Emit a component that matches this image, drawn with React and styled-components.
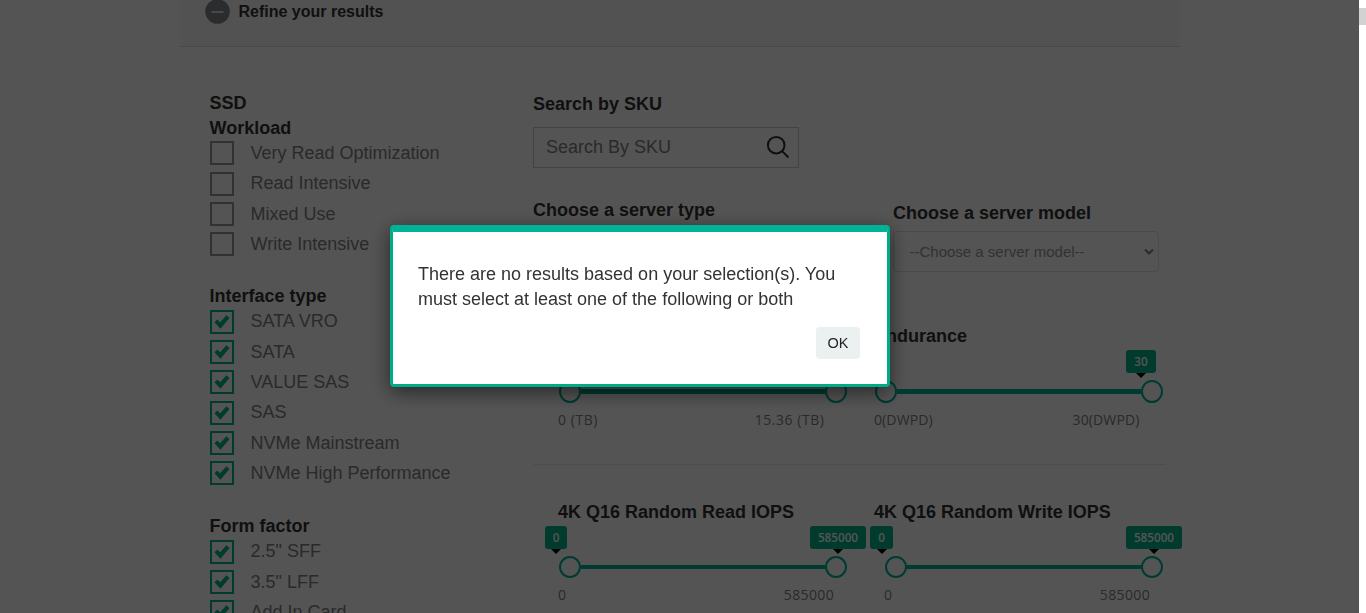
import React from 'react';
import styled, { createGlobalStyle, css } from 'styled-components';

const GlobalStyle = createGlobalStyle`
  *, *::before, *::after { box-sizing: border-box; }
  body {
    margin: 0;
    height: 613px;
    overflow: hidden;
    background: #fff;
    color: #333;
    font-family: Arial, "Liberation Sans", sans-serif;
    font-size: 18px;
    line-height: 25px;
  }
`;

const Screen = styled.div`
  display: flex;
  height: 613px;
  overflow: hidden;
`;

const Page = styled.main`
  flex: 1;
  padding-left: 180px;
`;

const Scrollbar = styled.div`
  width: 7px;
  background: #fff;
  padding-top: 8px;
`;

const Thumb = styled.div`
  height: 17px;
  background: #d2d2d2;
`;

const RefineBar = styled.header`
  display: flex;
  align-items: flex-start;
  gap: 9px;
  width: 1000px;
  height: 47px;
  padding-left: 24.5px;
  background: #f9f9f9;
  border-bottom: 1px solid #dcdcdc;
  font-size: 16px;
  font-weight: bold;
  line-height: 23px;
`;

const MinusIcon = styled.svg`
  width: 25px;
  height: 25px;
  margin-top: -1px;
`;

const Columns = styled.div`
  display: flex;
  width: 1000px;
  padding: 43px 0 0 29.5px;
`;

const Filters = styled.aside`
  width: 323.5px;
`;

const Group = styled.section`
  margin-bottom: ${(p) => (p.$on ? 23 : 22.07)}px;
`;

const Heading = styled.h3`
  height: 25px;
  margin: 0;
  font-size: 18px;
  font-weight: bold;
  line-height: ${(p) => (p.$high ? 26 : 27)}px;
`;

const Option = styled.label`
  display: flex;
  align-items: center;
  gap: 17px;
  height: 30.33px;
  color: #808080;
  line-height: 25px;
`;

const OptionText = styled.span`
  margin-top: -3.59px;
`;

const Box = styled.span`
  display: flex;
  align-items: center;
  justify-content: center;
  flex: none;
  width: 24px;
  height: 24px;
  margin-top: -3.7px;
  border: 2px solid ${(p) => (p.$on ? '#00b388' : '#999')};
`;

const Results = styled.div`
  width: 633px;
  padding-top: 1px;
`;

const SearchField = styled.div`
  display: flex;
  align-items: center;
  justify-content: space-between;
  width: 266px;
  height: 41px;
  margin-top: 11px;
  padding: 0 8px 0 12px;
  border: 1px solid #ccc;
  color: #808080;
`;

const SearchIcon = styled.svg`
  width: 24px;
  height: 24px;
  margin-top: -1px;
`;

const Servers = styled.div`
  display: flex;
  gap: 94px;
  margin-top: 29px;
  height: 126px;
`;

const ServerField = styled.div`
  width: 266px;
  padding-top: ${(p) => p.$drop || 0}px;
`;

const Select = styled.div`
  display: flex;
  align-items: center;
  justify-content: space-between;
  height: 41px;
  margin-top: 6px;
  padding: 0 4px 0 15.5px;
  border: 1px solid #e2e2e2;
  border-radius: 4px;
  color: #999;
  font-size: 15px;
`;

const SliderRow = styled.div`
  display: flex;
  padding: ${(p) => p.$top || 0}px 0 0 25px;
  height: ${(p) => p.$height}px;
  ${(p) => p.$rule && css`border-bottom: 1px solid #e9e9e9;`}
`;

const SliderCell = styled.div`
  flex: none;
  width: 316px;
`;

const Track = styled.div`
  position: relative;
  display: flex;
  align-items: center;
  width: ${(p) => p.$width}px;
  height: ${(p) => (p.$tall ? 23 : 22)}px;
  margin: 32px 0 0 ${(p) => p.$left}px;
`;

const Handle = styled.span`
  flex: none;
  width: 22px;
  height: 100%;
  border: 2px solid #00b398;
  border-radius: 50%;
`;

const Line = styled.span`
  flex: 1;
  height: ${(p) => (p.$tall ? 5 : 4)}px;
  background: #00b398;
`;

const Tip = styled.span`
  position: absolute;
  top: -30px;
  left: ${(p) => p.$x}px;
  width: ${(p) => p.$w}px;
  height: 23px;
  border-radius: 3px;
  background: #00b388;
  color: #fff;
  font: 600 11.7px/22px "Open Sans", "Noto Sans", sans-serif;
  text-align: center;
  &::after {
    content: '';
    position: absolute;
    top: 23px;
    left: calc(50% - 5px);
    border: 5px solid transparent;
    border-top-color: #000;
    border-bottom: 0;
  }
`;

const Scale = styled.div`
  display: flex;
  justify-content: space-between;
  width: ${(p) => p.$width}px;
  margin: 6px 0 0 ${(p) => p.$left || 0}px;
  color: #808080;
  font: 14px/22px "Open Sans", "Noto Sans", sans-serif;
  letter-spacing: ${(p) => p.$spacing || 0}px;
`;

const Overlay = styled.div`
  position: fixed;
  inset: 0 7px 0 0;
  background: rgba(0, 0, 0, 0.67);
`;

const Dialog = styled.div`
  position: fixed;
  top: 225px;
  left: 390px;
  display: flex;
  flex-direction: column;
  width: 500px;
  height: 162px;
  padding: 30px 27px 25px 25px;
  border: 3px solid #00ac86;
  border-top: 7px solid #00b398;
  border-radius: 4px;
  background: #fff;
  box-shadow: 0 5px 20px rgba(0, 0, 0, 0.55);
  color: #333;
`;

const Message = styled.p`
  margin: 0;
  line-height: 25px;
`;

const OkButton = styled.button`
  align-self: flex-end;
  width: 44px;
  height: 32px;
  margin-top: 15px;
  padding: 0;
  border: 0;
  border-radius: 4px;
  background: #ebf0f0;
  color: #222;
  font: 14.5px/32px Arial, "Liberation Sans", sans-serif;
`;

const Check = () => (
  <svg width="16" height="16" viewBox="0 0 16 16">
    <path d="M0.5 8.3 L3.3 5.6 L6.2 8.2 L12.4 1.2 L15.5 3.9 L6.4 14.8 Z" fill="#00b388" />
  </svg>
);

const FilterGroup = ({ titles, options, on }) => (
  <Group $on={on}>
    {titles.map((t) => <Heading key={t} $high={on}>{t}</Heading>)}
    {options.map((o) => (
      <Option key={o}>
        <Box $on={on}>{on && <Check />}</Box>
        <OptionText>{o}</OptionText>
      </Option>
    ))}
  </Group>
);

const Slider = ({ title, min, max, tips, tall, left = 1, width = 288, scaleLeft, scaleWidth, spacing }) => (
  <SliderCell>
    <Heading>{title}</Heading>
    <Track $left={left} $width={width} $tall={tall}>
      <Handle />
      <Line $tall={tall} />
      <Handle />
      {tips.map((t) => <Tip key={t.x} $x={t.x} $w={t.w}>{t.text}</Tip>)}
    </Track>
    <Scale $left={scaleLeft} $width={scaleWidth} $spacing={spacing}>
      <span>{min}</span>
      <span>{max}</span>
    </Scale>
  </SliderCell>
);

export default function App() {
  return (
    <>
      <GlobalStyle />
      <Screen>
        <Page>
          <RefineBar>
            <MinusIcon viewBox="0 0 25 25">
              <circle cx="12.5" cy="12.5" r="12.3" fill="#80868a" />
              <path d="M6.5 13H18.5" stroke="#eee" strokeWidth="1.6" />
            </MinusIcon>
            Refine your results
          </RefineBar>
          <Columns>
            <Filters>
              <FilterGroup
                titles={['SSD', 'Workload']}
                options={['Very Read Optimization', 'Read Intensive', 'Mixed Use', 'Write Intensive']}
              />
              <FilterGroup
                on
                titles={['Interface type']}
                options={['SATA VRO', 'SATA', 'VALUE SAS', 'SAS', 'NVMe Mainstream', 'NVMe High Performance']}
              />
              <FilterGroup on titles={['Form factor']} options={['2.5" SFF', '3.5" LFF', 'Add In Card']} />
            </Filters>
            <Results>
              <Heading>Search by SKU</Heading>
              <SearchField>
                Search By SKU
                <SearchIcon viewBox="0 0 24 24" fill="none" stroke="#333" strokeWidth="2">
                  <circle cx="10.2" cy="10.2" r="8.3" />
                  <path d="M16 16L22.5 22.5" />
                </SearchIcon>
              </SearchField>
              <Servers>
                <ServerField>
                  <Heading>Choose a server type</Heading>
                </ServerField>
                <ServerField $drop={3}>
                  <Heading>Choose a server model</Heading>
                  <Select>
                    --Choose a server model--
                    <svg width="10" height="8" viewBox="0 0 10 8" fill="none" stroke="#808080" strokeWidth="2">
                      <path d="M1 1.5L5 5.5L9 1.5" />
                    </svg>
                  </Select>
                </ServerField>
              </Servers>
              <SliderRow $height={142} $rule>
                <Slider
                  tall
                  title="Capacity"
                  min="0 (TB)"
                  max="15.36 (TB)"
                  tips={[]}
                  scaleWidth={266.5}
                  spacing={0.55}
                />
                <Slider
                  tall
                  title="Endurance"
                  min="0(DWPD)"
                  max="30(DWPD)"
                  tips={[{ x: 251, w: 30, text: '30' }]}
                  scaleWidth={265.5}
                  spacing={0.12}
                />
              </SliderRow>
              <SliderRow $height={150} $top={34}>
                <Slider
                  title="4K Q16 Random Read IOPS"
                  min="0"
                  max="585000"
                  tips={[{ x: -14, w: 22, text: '0' }, { x: 251, w: 56, text: '585000' }]}
                  scaleWidth={276}
                  spacing={0.35}
                />
                <Slider
                  title="4K Q16 Random Write IOPS"
                  min="0"
                  max="585000"
                  left={11}
                  width={278}
                  tips={[{ x: -15, w: 23, text: '0' }, { x: 241, w: 56, text: '585000' }]}
                  scaleLeft={10}
                  scaleWidth={266}
                  spacing={0.35}
                />
              </SliderRow>
            </Results>
          </Columns>
        </Page>
        <Scrollbar><Thumb /></Scrollbar>
      </Screen>
      <Overlay />
      <Dialog role="dialog">
        <Message>
          There are no results based on your selection(s). You must select at least one of the following or both
        </Message>
        <OkButton>OK</OkButton>
      </Dialog>
    </>
  );
}
